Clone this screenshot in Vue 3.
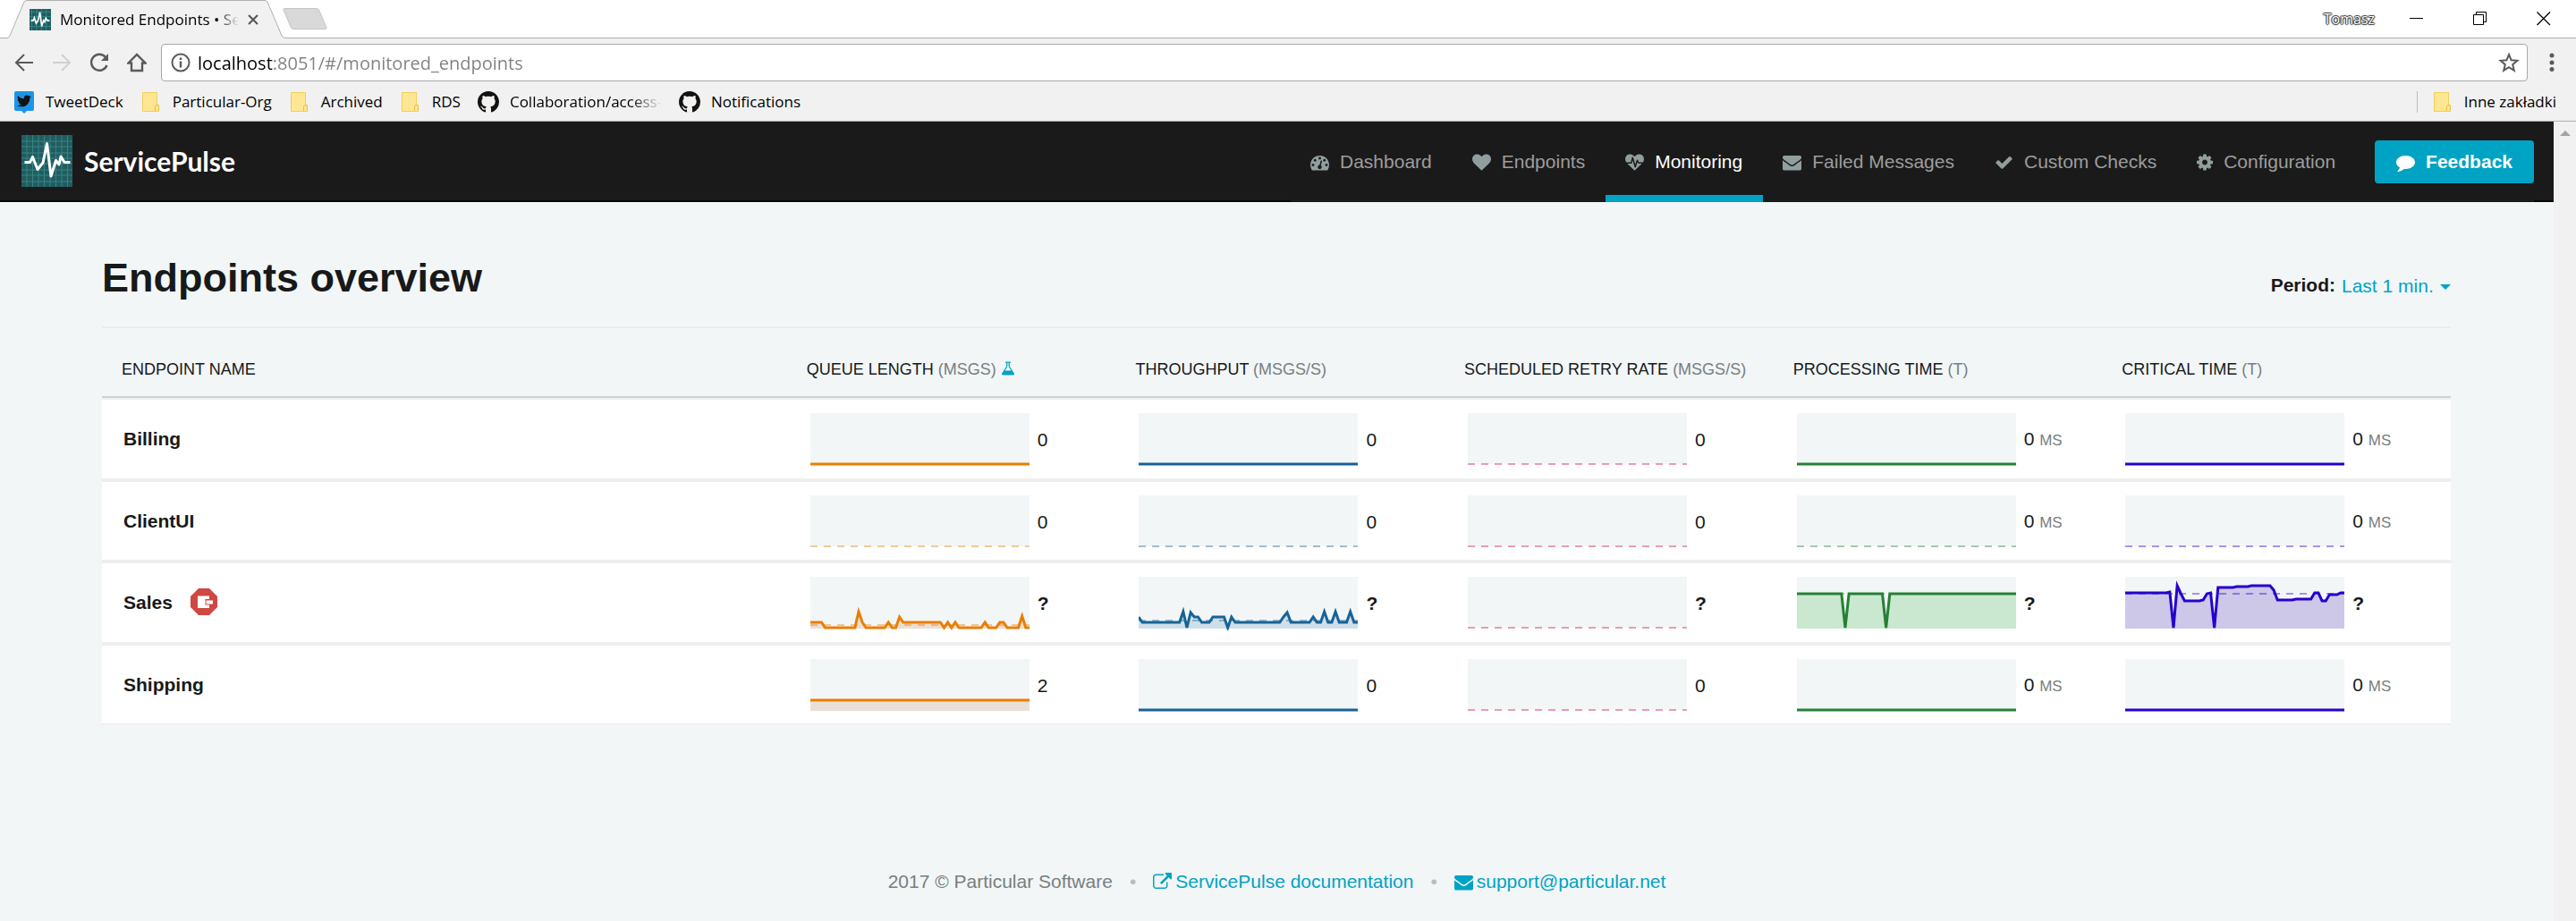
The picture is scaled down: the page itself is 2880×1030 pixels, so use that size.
<script setup>
import { ref } from 'vue'

const icons = {
  dashboard: { box: '0 0 1792 1792', w: 21, d: 'M384 1152q0-53-37.5-90.5t-90.5-37.5-90.5 37.5-37.5 90.5 37.5 90.5 90.5 37.5 90.5-37.5 37.5-90.5zm192-448q0-53-37.5-90.5t-90.5-37.5-90.5 37.5-37.5 90.5 37.5 90.5 90.5 37.5 90.5-37.5 37.5-90.5zm428 481l101-382q6-26-7.5-48.5t-38.5-29.5-48 6.5-30 39.5l-101 382q-60 5-107 43.5t-63 98.5q-20 77 20 146t117 89 146-20 89-117q16-60-6-117t-72-91zm660-33q0-53-37.5-90.5t-90.5-37.5-90.5 37.5-37.5 90.5 37.5 90.5 90.5 37.5 90.5-37.5 37.5-90.5zm-640-640q0-53-37.5-90.5t-90.5-37.5-90.5 37.5-37.5 90.5 37.5 90.5 90.5 37.5 90.5-37.5 37.5-90.5zm448 192q0-53-37.5-90.5t-90.5-37.5-90.5 37.5-37.5 90.5 37.5 90.5 90.5 37.5 90.5-37.5 37.5-90.5zm320 448q0 261-141 483-19 29-54 29h-1402q-35 0-54-29-141-221-141-483 0-182 71-348t191-286 286-191 348-71 348 71 286 191 191 286 71 348z' },
  heart: { box: '0 0 1792 1792', w: 21, d: 'M896 1664q-26 0-44-18l-624-602q-10-8-27.5-26t-55.5-65.5-68-97.5-53.5-121-23.5-138q0-220 127-344t351-124q62 0 126.5 21.5t120 58 95.5 68.5 76 68q36-36 76-68t95.5-68.5 120-58 126.5-21.5q224 0 351 124t127 344q0 221-229 450l-623 600q-18 18-44 18z' },
  heartbeat: { box: '0 0 1792 1792', w: 21, d: 'M1280 1024h305q-5 6-10 10.5t-9 7.5l-3 4-623 600q-18 18-44 18t-44-18l-624-602q-5-2-21-20h369q22 0 39.5-13.5t22.5-34.5l70-281 190 667q6 20 23 33t39 13q21 0 38-13t23-33l146-485 56 112q18 35 57 35zm512-428q0 145-103 300h-369l-111-221q-8-17-25.5-27t-36.5-8q-45 5-56 46l-129 430-196-686q-6-20-23.5-33t-39.5-13-39 13.5-22 34.5l-116 464h-423q-103-155-103-300 0-220 127-344t351-124q62 0 126.5 21.5t120 58 95.5 68.5 76 68q36-36 76-68t95.5-68.5 120-58 126.5-21.5q224 0 351 124t127 344z' },
  envelope: { box: '0 0 1792 1792', w: 21, d: 'M1792 710v794q0 66-47 113t-113 47h-1472q-66 0-113-47t-47-113v-794q44 49 101 87 362 246 497 345 57 42 92.5 65.5t94.5 48 110 24.5h2q51 0 110-24.5t94.5-48 92.5-65.5q170-123 498-345 57-39 100-87zm0-294q0 79-49 151t-122 123q-376 261-468 325-10 7-42.5 31t-54 38.5-52 32.5-57.5 27-50 9h-2q-23 0-50-9t-57.5-27-52-32.5-54-38.5-42.5-31q-91-64-262-182.5t-205-142.5q-62-42-117-115.5t-55-136.5q0-78 41.5-130t118.5-52h1472q65 0 112.5 47t47.5 113z' },
  check: { box: '0 0 1792 1792', w: 21, d: 'M1671 566q0 40-28 68l-724 724-136 136q-28 28-68 28t-68-28l-136-136-362-362q-28-28-28-68t28-68l136-136q28-28 68-28t68 28l294 295 656-657q28-28 68-28t68 28l136 136q28 28 28 68z' },
  cog: { box: '128 0 1536 1792', w: 18, d: 'M1152 896q0-106-75-181t-181-75-181 75-75 181 75 181 181 75 181-75 75-181zm512-109v222q0 12-8 23t-20 13l-185 28q-19 54-39 91 35 50 107 138 10 12 10 25t-9 23q-27 37-99 108t-94 71q-12 0-26-9l-138-108q-44 23-91 38-16 136-29 186-7 28-36 28h-222q-14 0-24.5-8.5t-11.5-21.5l-28-184q-49-16-90-37l-141 107q-10 9-25 9-14 0-25-11-126-114-165-168-7-10-7-23 0-12 8-23 15-21 51-66.5t54-70.5q-27-50-41-99l-183-27q-13-2-21-12.5t-8-23.5v-222q0-12 8-23t19-13l186-28q14-46 39-92-40-57-107-138-10-12-10-24 0-10 9-23 26-36 98.5-107.5t94.5-71.5q13 0 26 10l138 107q44-23 91-38 16-136 29-186 7-28 36-28h222q14 0 24.5 8.5t11.5 21.5l28 184q49 16 90 37l142-107q9-9 24-9 13 0 25 10 129 119 165 170 7 8 7 22 0 12-8 23-15 21-51 66.5t-54 70.5q26 50 41 98l183 28q13 2 21 12.5t8 23.5z' },
}

const navItems = [
  { label: 'Dashboard', icon: icons.dashboard, href: '#/dashboard' },
  { label: 'Endpoints', icon: icons.heart, href: '#/endpoints' },
  { label: 'Monitoring', icon: icons.heartbeat, href: '#/monitored_endpoints', active: true },
  { label: 'Failed Messages', icon: icons.envelope, href: '#/failed-messages' },
  { label: 'Custom Checks', icon: icons.check, href: '#/custom-checks' },
  { label: 'Configuration', icon: icons.cog, href: '#/configuration' },
]

const bookmarks = [
  { label: 'TweetDeck', icon: 'twitter' },
  { label: 'Particular-Org', icon: 'folder' },
  { label: 'Archived', icon: 'folder' },
  { label: 'RDS', icon: 'folder' },
  { label: 'Collaboration/access-', icon: 'github', clipped: true },
  { label: 'Notifications', icon: 'github' },
]

const githubPath = 'M8 0C3.58 0 0 3.58 0 8c0 3.54 2.29 6.53 5.47 7.59.4.07.55-.17.55-.38 0-.19-.01-.82-.01-1.49-2.01.37-2.53-.49-2.69-.94-.09-.23-.48-.94-.82-1.13-.28-.15-.68-.52-.01-.53.63-.01 1.08.58 1.23.82.72 1.21 1.87.87 2.33.66.07-.52.28-.87.51-1.07-1.78-.2-3.64-.89-3.64-3.95 0-.87.31-1.59.82-2.15-.08-.2-.36-1.02.08-2.12 0 0 .67-.21 2.2.82.64-.18 1.32-.27 2-.27.68 0 1.36.09 2 .27 1.53-1.04 2.2-.82 2.2-.82.44 1.1.16 1.92.08 2.12.51.56.82 1.27.82 2.15 0 3.07-1.87 3.75-3.65 3.95.29.25.54.73.54 1.48 0 1.07-.01 1.93-.01 2.2 0 .21.15.46.55.38A8.013 8.013 0 0016 8c0-4.42-3.58-8-8-8z'

const url = ref('localhost:8051/#/monitored_endpoints')
const period = ref('1')

const columns = [
  { title: 'Queue Length', unit: '(msgs)', beta: true },
  { title: 'Throughput', unit: '(msgs/s)' },
  { title: 'Scheduled Retry Rate', unit: '(msgs/s)' },
  { title: 'Processing Time', unit: '(t)' },
  { title: 'Critical Time', unit: '(t)' },
]

const colors = ['#ea7e00', '#176397', '#cc1252', '#258135', '#2700cb']
const fills = ['#eadfd6', '#cfdfe9', '#efd5df', '#c9e8cf', '#cdc7e8']

// Each series holds [repeat, height] runs over a 60-sample window, heights measured from the chart top.
const expand = (runs) => runs.flatMap(([n, y]) => Array(n).fill(y))
const flat = (y) => [[60, y]]
const BASE = 57

const salesQueue = [[4, 51], [9, 57], [1, 39], [1, 51], [6, 57], [1, 51], [2, 57], [1, 45], [11, 51], [1, 57], [1, 51], [1, 57], [1, 51], [7, 57], [1, 51], [3, 57], [2, 51], [4, 57], [1, 44], [2, 57]]
const salesThroughput = [[1, 45], [11, 51], [1, 39], [1, 57], [1, 40], [2, 45], [3, 51], [4, 45], [1, 57], [1, 45], [13, 51], [1, 45], [1, 40], [6, 51], [1, 45], [2, 51], [1, 39], [2, 51], [1, 39], [3, 51], [1, 39], [2, 51]]
const salesProcessing = [[13, 19], [1, 57], [10, 19], [1, 57], [35, 19]]
const salesCritical = [[7, 18], [5, 18], [1, 17], [1, 57], [1, 10], [1, 19], [5, 27], [1, 26], [1, 19], [1, 18], [1, 57], [5, 12], [4, 11], [6, 10], [1, 15], [5, 26], [5, 25], [2, 18], [2, 27], [3, 20], [2, 18]]

const line = (runs, avg = null) => ({ runs, avg })
const dashed = { runs: null, avg: BASE }

const endpoints = [
  { name: 'Billing', values: ['0', '0', '0', '0', '0'], charts: [line(flat(57)), line(flat(57)), dashed, line(flat(57)), line(flat(57))] },
  { name: 'ClientUI', values: ['0', '0', '0', '0', '0'], charts: [dashed, dashed, dashed, dashed, dashed] },
  { name: 'Sales', stale: true, values: ['?', '?', '?', '?', '?'], charts: [line(salesQueue, 54), line(salesThroughput, 49), dashed, line(salesProcessing, 19), line(salesCritical, 19)] },
  { name: 'Shipping', values: ['2', '0', '0', '0', '0'], charts: [line(flat(46)), line(flat(57)), dashed, line(flat(57)), line(flat(57))] },
]

const linePath = (runs) => 'M' + expand(runs).map((y, i) => `${((i * 245) / 59).toFixed(2)} ${y}`).join('L')
const areaPath = (runs) => `${linePath(runs)}L245 58L0 58Z`
</script>

<template>
  <div class="window">
    <header class="chrome">
      <div class="tabstrip">
        <div class="tab">
          <svg class="tab-shape" width="312" height="43" viewBox="0 0 312 43" aria-hidden="true">
            <path d="M0 43 L3 41 L19 2 Q20 0.5 22 0.5 H288 Q290 0.5 291 2 L308 41 L312 43Z" fill="#f1f1f1" />
            <path d="M0 42.5 Q2 42 3 40 L19 2 Q20 0.5 22 0.5 H288 Q290 0.5 291 2 L307 40 Q308 42.5 312 42.5" fill="none" stroke="#b0b0b0" />
          </svg>
          <svg class="tab-icon" width="24" height="24" viewBox="0 0 58 58" aria-hidden="true">
            <rect width="58" height="58" fill="#225c60" />
            <path d="M6 0V58M19 0V58M32 0V58M45 0V58M0 8H58M0 21H58M0 34H58M0 47H58" stroke="#3a8f8c" stroke-width="2" />
            <path d="M4 31H10L13 24L18 39L23 31L28 9L33 47L38 31L41 35L44 25L48 31H54" fill="none" stroke="#fff" stroke-width="4" />
          </svg>
          <span class="tab-title">Monitored Endpoints • ServicePulse</span>
          <button class="plain" type="button" aria-label="Close tab">
            <svg width="12" height="12" viewBox="0 0 12 12"><path d="M1 1L11 11M11 1L1 11" stroke="#555" stroke-width="2" /></svg>
          </button>
        </div>
        <button class="plain new-tab" type="button" aria-label="New tab">
          <svg width="50" height="26" viewBox="0 0 50 26"><path d="M2 1.5H38Q40 1.5 41 4L49 23Q49 24.5 47 24.5H12Q10 24.5 9 22L1 3Q1 1.5 2 1.5Z" fill="#d9d9d9" stroke="#c4c4c4" /></svg>
        </button>
        <div class="window-controls">
          <span class="profile">Tomasz</span>
          <button class="plain" type="button" aria-label="Minimize"><svg width="16" height="16" viewBox="0 0 16 16"><path d="M0 7.5H15" stroke="#000" /></svg></button>
          <button class="plain" type="button" aria-label="Restore"><svg width="16" height="16" viewBox="0 0 16 16"><path d="M.5 3.5H11.5V14.5H.5ZM3.5 3.5V.5H14.5V11.5H11.5" fill="none" stroke="#000" /></svg></button>
          <button class="plain" type="button" aria-label="Close"><svg width="16" height="16" viewBox="0 0 16 16"><path d="M.5 .5L15 15M15 .5L.5 15" stroke="#000" stroke-width="1.3" /></svg></button>
        </div>
      </div>

      <div class="toolbar">
        <button class="plain" type="button" aria-label="Back"><svg width="22" height="22" viewBox="0 0 22 22"><path d="M21 11H3M11 2L2 11L11 20" fill="none" stroke="#5a5a5a" stroke-width="2" /></svg></button>
        <button class="plain" type="button" aria-label="Forward" disabled><svg width="22" height="22" viewBox="0 0 22 22"><path d="M1 11H19M11 2L20 11L11 20" fill="none" stroke="#d0d0d0" stroke-width="2" /></svg></button>
        <button class="plain" type="button" aria-label="Reload"><svg width="22" height="22" viewBox="0 0 22 22"><path d="M18 5A9 9 0 1 0 19.5 14" fill="none" stroke="#5a5a5a" stroke-width="2.4" /><path d="M21 1V9H13Z" fill="#5a5a5a" /></svg></button>
        <button class="plain" type="button" aria-label="Home"><svg width="22" height="22" viewBox="0 0 22 22"><path d="M1.5 11.5L11 2L20.5 11.5H17V20H5V11.5Z" fill="none" stroke="#5a5a5a" stroke-width="2.4" /></svg></button>
        <div class="omnibox">
          <svg width="22" height="22" viewBox="0 0 22 22" aria-hidden="true"><circle cx="11" cy="11" r="9.5" fill="none" stroke="#5a5a5a" stroke-width="2" /><path d="M11 9.5V16.5M11 5.5V8" stroke="#5a5a5a" stroke-width="2.4" /></svg>
          <input v-model="url" type="text" aria-label="Address" spellcheck="false" />
          <button class="plain" type="button" aria-label="Bookmark this page"><svg width="24" height="24" viewBox="0 0 24 24"><path d="M12 3L14.6 9.3L21.4 9.8L16.2 14.2L17.8 20.8L12 17.2L6.2 20.8L7.8 14.2L2.6 9.8L9.4 9.3Z" fill="none" stroke="#5a5a5a" stroke-width="2" /></svg></button>
        </div>
        <button class="plain" type="button" aria-label="Menu"><svg width="6" height="22" viewBox="0 0 6 22"><g fill="#5a5a5a"><circle cx="3" cy="3" r="2.5" /><circle cx="3" cy="11" r="2.5" /><circle cx="3" cy="18.5" r="2.5" /></g></svg></button>
      </div>

      <nav class="bookmarks" aria-label="Bookmarks">
        <a v-for="b in bookmarks" :key="b.label" href="#">
          <svg v-if="b.icon === 'twitter'" width="24" height="26" viewBox="0 0 24 26" aria-hidden="true">
            <path d="M3 1H21Q23 1 23 3V21Q23 23 21 23H15L12 26L9 23H3Q1 23 1 21V3Q1 1 3 1Z" fill="#1b95e9" />
            <g transform="translate(4 4) scale(.66)"><path fill="#111" d="M23.953 4.57a10 10 0 01-2.825.775 4.958 4.958 0 002.163-2.723c-.951.555-2.005.959-3.127 1.184a4.92 4.92 0 00-8.384 4.482C7.69 8.095 4.067 6.13 1.64 3.162a4.822 4.822 0 00-.666 2.475c0 1.71.87 3.213 2.188 4.096a4.904 4.904 0 01-2.228-.616v.06a4.923 4.923 0 003.946 4.827 4.996 4.996 0 01-2.212.085 4.936 4.936 0 004.604 3.417 9.867 9.867 0 01-6.102 2.105c-.39 0-.779-.023-1.17-.067a13.995 13.995 0 007.557 2.209c9.053 0 13.998-7.496 13.998-13.985 0-.21 0-.42-.015-.63A9.935 9.935 0 0024 4.59z" /></g>
          </svg>
          <svg v-else-if="b.icon === 'folder'" width="24" height="24" viewBox="0 0 24 24" aria-hidden="true">
            <path d="M2.500 1.500H18.500V15.500H20.500V22.500H2.500Z" fill="#ffe694" stroke="#f0cf58" /><path d="M16.500 22V17.500Q16.500 15.500 18.500 15.500T20.500 17.500V22" fill="#ffe694" stroke="#e8bf3c" />
          </svg>
          <svg v-else width="24" height="24" viewBox="0 0 16 16" aria-hidden="true"><path fill="#14110f" :d="githubPath" /></svg>
          <span :class="{ clipped: b.clipped }">{{ b.label }}</span>
        </a>
        <a class="other" href="#">
          <svg width="24" height="24" viewBox="0 0 24 24" aria-hidden="true">
            <path d="M2.500 1.500H18.500V15.500H20.500V22.500H2.500Z" fill="#ffe694" stroke="#f0cf58" /><path d="M16.500 22V17.500Q16.500 15.500 18.500 15.500T20.500 17.500V22" fill="#ffe694" stroke="#e8bf3c" />
          </svg>
          <span>Inne zakładki</span>
        </a>
      </nav>
    </header>

    <div class="viewport">
      <div class="page">
        <div class="navbar">
          <a class="brand" href="#/dashboard">
            <svg width="57" height="58" viewBox="0 0 57 58" aria-hidden="true">
              <rect width="57" height="58" fill="#225c60" />
              <path d="M6 0V58M12.5 0V58M19 0V58M25.5 0V58M32 0V58M38.5 0V58M45 0V58M51.5 0V58M0 7H58M0 13H58M0 20H58M0 26H58M0 32H58M0 39H58M0 45H58M0 52H58" stroke="#348583" />
              <path d="M3.5 30.5H9.5L12.5 24.5L18 38.5L24 31L28.5 9.5L33 46L38.5 28.5L42 33L44 24L48 30.5H54.5" fill="none" stroke="#fff" stroke-width="3" stroke-linejoin="round" />
            </svg>
            <span>ServicePulse</span>
          </a>
          <nav class="main-nav" aria-label="Main">
            <a v-for="item in navItems" :key="item.label" :href="item.href" :class="{ active: item.active }">
              <svg :width="item.icon.w" height="21" :viewBox="item.icon.box" aria-hidden="true"><path :d="item.icon.d" /></svg>
              <span>{{ item.label }}</span>
            </a>
            <button class="feedback" type="button">
              <svg width="21" height="21" viewBox="0 0 1792 1792" aria-hidden="true"><path d="M1792 896q0 174-120 321.500t-326 233-450 85.500q-70 0-145-8-198 175-460 242-49 14-114 22-17 2-30.500-9t-17.500-29v-1q-3-4-.5-12t2-10 4.500-9.500l6-9 7-8.500 8-9q7-8 31-34.500t34.500-38 31-39.500 32.500-51 27-59 26-76q-157-89-247.500-220t-90.500-281q0-130 71-248.500t191-204.500 286-136.500 348-50.500q244 0 450 85.500t326 233 120 321.500z" /></svg>
              Feedback
            </button>
          </nav>
        </div>

        <main>
          <div class="title-row">
            <h1>Endpoints overview</h1>
            <div class="period">
              <label for="period">Period:</label>
              <select id="period" v-model="period">
                <option value="1">Last 1 min.</option>
              </select>
              <svg width="12" height="6" viewBox="0 0 12 6" aria-hidden="true"><path d="M0 0H12L6 6Z" fill="#00a3c4" /></svg>
            </div>
          </div>

          <table>
            <colgroup>
              <col class="name-col" />
              <col v-for="c in columns" :key="c.title" />
            </colgroup>
            <thead>
              <tr>
                <th scope="col" class="name">Endpoint name</th>
                <th v-for="c in columns" :key="c.title" scope="col">
                  {{ c.title }} <span class="unit">{{ c.unit }}</span>
                  <svg v-if="c.beta" class="flask" width="16" height="16" viewBox="64 64 1664 1664" aria-hidden="true"><path d="M1591 1448q56 89 21.500 152.500t-140.500 63.500h-1152q-106 0-140.500-63.500t21.500-152.500l503-793v-399h-64q-26 0-45-19t-19-45 19-45 45-19h512q26 0 45 19t19 45-19 45-45 19h-64v399zm-779-725l-272 429h712l-272-429-20-31v-436h-128v436z" /></svg>
                </th>
              </tr>
            </thead>
            <tbody>
              <tr v-for="e in endpoints" :key="e.name">
                <td class="name">
                  <div class="cell">
                    <a href="#/endpoint_details">{{ e.name }}</a>
                    <svg v-if="e.stale" class="badge" width="30" height="30" viewBox="0 0 30 30" role="img" aria-label="Not sending data">
                      <path d="M9 0H21L30 9V21L21 30H9L0 21V9Z" fill="#ce4844" />
                      <path d="M8 8.500H21V12H16.500V18.500H21V22H8Z" fill="#fff" /><rect x="17.500" y="13.500" width="7.500" height="4" fill="#fff" />
                    </svg>
                  </div>
                </td>
                <td v-for="(chart, i) in e.charts" :key="i">
                  <div class="cell">
                    <svg class="chart" width="245" height="60" viewBox="0 0 245 60" aria-hidden="true">
                      <rect width="245" height="57" fill="#f2f6f7" />
                      <path v-if="chart.runs" :d="areaPath(chart.runs)" :fill="fills[i]" />
                      <path v-if="chart.avg !== null" :d="`M0 ${chart.avg}H245`" :stroke="colors[i]" stroke-width="2" stroke-dasharray="8 7" opacity=".4" />
                      <path v-if="chart.runs" :d="linePath(chart.runs)" fill="none" :stroke="colors[i]" stroke-width="3" />
                    </svg>
                    <span class="value" :class="{ unknown: e.stale }">{{ e.values[i] }} <small v-if="i > 2 && !e.stale">MS</small></span>
                  </div>
                </td>
              </tr>
            </tbody>
          </table>
        </main>

        <footer>
          <span>2017 © Particular Software</span>
          <span class="dot">•</span>
          <a href="#/docs">
            <svg width="21" height="21" viewBox="0 0 1792 1792" aria-hidden="true"><path d="M1408 928v320q0 119-84.500 203.500t-203.500 84.500h-832q-119 0-203.500-84.500t-84.500-203.500v-832q0-119 84.500-203.500t203.500-84.500h704q14 0 23 9t9 23v64q0 14-9 23t-23 9h-704q-66 0-113 47t-47 113v832q0 66 47 113t113 47h832q66 0 113-47t47-113v-320q0-14 9-23t23-9h64q14 0 23 9t9 23zm384-864v512q0 26-19 45t-45 19-45-19l-176-176-652 652q-10 10-23 10t-23-10l-114-114q-10-10-10-23t10-23l652-652-176-176q-19-19-19-45t19-45 45-19h512q26 0 45 19t19 45z" /></svg>
            ServicePulse documentation
          </a>
          <span class="dot">•</span>
          <a href="mailto:support@particular.net">
            <svg width="21" height="21" :viewBox="icons.envelope.box" aria-hidden="true"><path :d="icons.envelope.d" /></svg>
            support@particular.net
          </a>
        </footer>
      </div>
      <div class="scrollbar" aria-hidden="true">
        <svg width="12" height="6" viewBox="0 0 12 6"><path d="M0 6L6 0L12 6Z" fill="#a3a3a3" /></svg>
      </div>
    </div>
  </div>
</template>

<style>
body {
  margin: 0;
  background: #f2f6f7;
}
</style>

<style scoped>
.window {
  display: flex;
  flex-direction: column;
  min-height: 100vh;
  font-family: "Liberation Sans", Arial, sans-serif;
  font-size: 21px;
  line-height: 30px;
  color: #181919;
}
a {
  text-decoration: none;
}
svg {
  display: block;
  flex: none;
}
.plain {
  padding: 0;
  border: 0;
  background: none;
}

/* Browser frame */
.chrome {
  font-family: "Open Sans", "Noto Sans", sans-serif;
  font-size: 17px;
  line-height: 24px;
  color: #000;
  background: #f1f1f1;
  border-bottom: 1px solid #b0b0b0;
}
.tabstrip {
  display: flex;
  height: 42px;
  padding-left: 8px;
  background: #fff;
  border-bottom: 1px solid #b0b0b0;
}
.tab {
  position: relative;
  display: flex;
  align-items: center;
  gap: 10px;
  box-sizing: border-box;
  width: 308px;
  height: 43px;
  padding: 0 27px 0 25px;
}
.tab-shape {
  position: absolute;
  top: 0;
  left: 0;
}
.tab-icon,
.tab-title,
.tab .plain {
  position: relative;
}
.tab-title {
  flex: 1;
  overflow: hidden;
  white-space: nowrap;
  mask-image: linear-gradient(90deg, #000 calc(100% - 24px), transparent);
}
.new-tab {
  align-self: center;
}
.window-controls {
  display: flex;
  align-items: center;
  gap: 55px;
  margin-left: auto;
  padding-right: 28px;
}
.profile {
  margin-right: -16px;
  font-size: 16px;
  color: #fff;
  text-shadow: 0 0 1px #333, 1px 0 1px #333, -1px 0 1px #333, 0 1px 1px #333, 0 -1px 1px #333;
}
.toolbar {
  display: flex;
  align-items: center;
  gap: 20px;
  padding: 6px 24px 0 16px;
}
.omnibox {
  display: flex;
  flex: 1;
  align-items: center;
  gap: 8px;
  box-sizing: border-box;
  height: 42px;
  margin-right: 4px;
  margin-left: -4px;
  padding: 0 8px 0 10px;
  background: #fff;
  border: 1px solid #a9a9a9;
  border-radius: 4px;
}
.omnibox input {
  flex: 1;
  padding: 0;
  border: 0;
  outline: 0;
  font: 20px "Open Sans", "Noto Sans", sans-serif;
  color: transparent;
  background: linear-gradient(90deg, #000 85px, #808080 85px);
  background-clip: text;
}
.bookmarks {
  display: flex;
  gap: 19px;
  align-items: center;
  box-sizing: border-box;
  height: 44px;
  padding: 2px 22px 0 15px;
}
.bookmarks a {
  display: flex;
  gap: 12px;
  align-items: center;
  color: #000;
}
.clipped {
  width: 170px;
  overflow: hidden;
  white-space: nowrap;
  mask-image: linear-gradient(90deg, #000 calc(100% - 36px), transparent);
}
.bookmarks .other {
  margin-left: auto;
  padding-left: 16px;
  border-left: 1px solid #bdbdbd;
}

/* Page */
.viewport {
  display: flex;
  flex: 1;
}
.page {
  display: flex;
  flex: 1;
  flex-direction: column;
  background: #f2f6f7;
}
.scrollbar {
  display: flex;
  justify-content: center;
  width: 25px;
  padding-top: 10px;
  background: #f1f1f1;
}
.navbar {
  display: flex;
  justify-content: space-between;
  height: 88px;
  padding: 0 22px 0 24px;
  background: #1a1a1a;
  border-bottom: 2px solid #080606;
}
.brand {
  display: flex;
  gap: 13px;
  align-items: center;
  font-family: Lato, sans-serif;
  font-size: 30px;
  font-weight: 700;
  color: #fff;
}
.main-nav {
  display: flex;
  align-items: center;
  height: 90px;
  background: #1a1a1a;
}
.main-nav a {
  display: flex;
  gap: 12px;
  align-items: center;
  box-sizing: border-box;
  height: 90px;
  padding: 8px 23px 0 22px;
  border-bottom: 8px solid transparent;
  color: #9d9d9d;
}
.main-nav a svg {
  fill: #929e9e;
}
.main-nav a.active {
  color: #fff;
  border-bottom-color: #00a3c4;
}
.feedback {
  display: flex;
  gap: 12px;
  align-items: center;
  height: 48px;
  margin-left: 21px;
  padding: 0 24px;
  border: 0;
  border-radius: 4px;
  font: bold 21px "Liberation Sans", Arial, sans-serif;
  color: #fff;
  background: #00a3c4;
}
.feedback svg {
  fill: #fff;
}
main {
  padding: 55px 115px 0 114px;
}
.title-row {
  display: flex;
  justify-content: space-between;
  align-items: baseline;
  height: 84px;
  border-bottom: 2px solid #e9eded;
}
h1 {
  margin: 0;
  font-size: 45px;
  line-height: 60px;
}
.period {
  display: flex;
  gap: 7px;
  align-items: center;
}
.period label {
  font-weight: bold;
}
.period select {
  appearance: none;
  padding: 0;
  border: 0;
  font: 21px "Liberation Sans", Arial, sans-serif;
  color: #00a3c4;
  background: none;
}
.period svg {
  margin-top: 4px;
}
table {
  width: 100%;
  table-layout: fixed;
  border-collapse: separate;
  border-spacing: 0;
}
col {
  width: 14%;
}
.name-col {
  width: 30%;
}
th {
  box-sizing: border-box;
  height: 78px;
  padding: 16px 0 0;
  border-bottom: 2px solid #cdd4d4;
  font-size: 18px;
  font-weight: normal;
  text-align: left;
  text-transform: uppercase;
  vertical-align: middle;
  white-space: nowrap;
}
th.name {
  padding-left: 22px;
}
.unit {
  color: #777f7f;
}
.flask {
  display: inline-block;
  margin-left: 5px;
  vertical-align: -1px;
  fill: #00a3c4;
}
tbody tr {
  background: #fff;
}
td {
  box-sizing: border-box;
  height: 92px;
  padding: 2px 0 0 4px;
  border-top: 2px solid #eee;
  border-bottom: 2px solid #eee;
}
tr:nth-child(even) td {
  height: 91px;
}
td.name {
  padding: 0 0 0 24px;
}
td.name a {
  font-weight: bold;
  color: inherit;
}
.cell {
  display: flex;
  gap: 9px;
  align-items: center;
}
.badge {
  margin: 0 0 2px 11px;
}
.value {
  white-space: nowrap;
}
.unknown {
  font-weight: bold;
}
small {
  font-size: 17px;
  color: #777f7f;
}
footer {
  display: flex;
  gap: 19px;
  justify-content: center;
  margin-top: 160px;
  color: #777f7f;
}
footer a {
  display: flex;
  gap: 4px;
  align-items: center;
  color: #00a3c4;
}
footer svg {
  fill: #00a3c4;
}
.dot {
  color: #b3bfbf;
}
</style>
